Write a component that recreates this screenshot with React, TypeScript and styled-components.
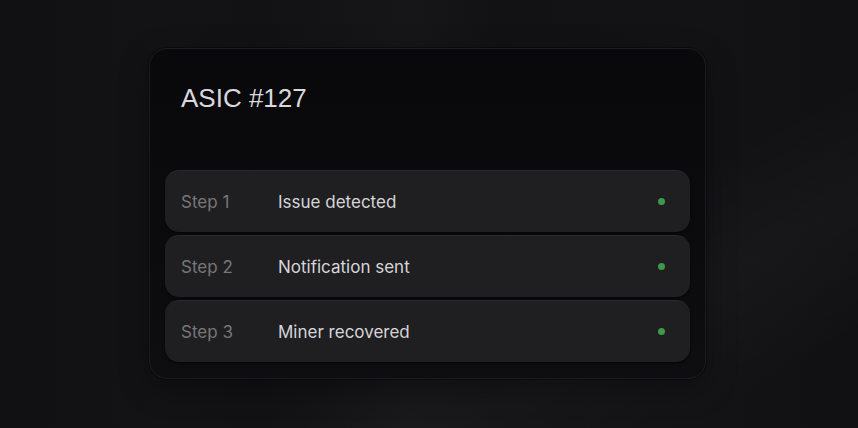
import styled, { createGlobalStyle } from "styled-components";

const GlobalStyle = createGlobalStyle`
  html, body {
    margin: 0;
    padding: 0;
    background: #121114;
  }
  * { box-sizing: border-box; }
`;

const Page = styled.div`
  width: 858px;
  height: 428px;
  display: flex;
  justify-content: flex-start;
  align-items: flex-start;
  padding: 48px 0 0 149px;
  overflow: hidden;
  background:
    linear-gradient(150deg, transparent 62%, rgba(255,255,255,0.025) 75%, transparent 90%),
    linear-gradient(90deg, #111013 0%, #131215 20%, #121114 30%, #161518 48%, #121114 58%, #131215 80%, #111013 100%);
`;

const Card = styled.div`
  width: 557px;
  padding: 34px 15px 16px;
  border-radius: 18px;
  background: linear-gradient(180deg, #09080b 0%, #0b0a0d 60%, #0e0d10 100%);
  border: 1px solid #1c1b1f;
  box-shadow: 0 0 0 1px rgba(0,0,0,0.35), 0 10px 30px rgba(0,0,0,0.35);
  display: flex;
  flex-direction: column;
`;

const Title = styled.h1`
  margin: 0 0 57px 16px;
  font-family: "Liberation Sans", Arial, sans-serif;
  font-weight: 400;
  font-size: 26px;
  line-height: 30px;
  color: #d9d8dc;
`;

const Steps = styled.div`
  display: flex;
  flex-direction: column;
  gap: 3px;
`;

const Row = styled.div`
  height: 62px;
  display: flex;
  align-items: center;
  padding: 0 25px 0 16px;
  border-radius: 14px;
  background: #1f1e21;
  border-top: 1px solid #2a292d;
  box-shadow: 0 2px 3px rgba(0,0,0,0.45);
  font-family: Inter, "Noto Sans", sans-serif;
  font-size: 17px;
`;

const StepNo = styled.span`
  width: 97px;
  color: #77767a;
`;

const Label = styled.span`
  flex: 1;
  color: #d6d5d9;
`;

const Dot = styled.span<{ $color: string }>`
  width: 7px;
  height: 7px;
  border-radius: 50%;
  background: ${(p) => p.$color};
`;

const steps = [
  { no: "Step 1", label: "Issue detected" },
  { no: "Step 2", label: "Notification sent" },
  { no: "Step 3", label: "Miner recovered" },
];

export default function App() {
  return (
    <>
      <GlobalStyle />
      <Page>
        <Card>
          <Title>ASIC #127</Title>
          <Steps>
            {steps.map((s) => (
              <Row key={s.no}>
                <StepNo>{s.no}</StepNo>
                <Label>{s.label}</Label>
                <Dot $color="#3e9a4b" />
              </Row>
            ))}
          </Steps>
        </Card>
      </Page>
    </>
  );
}
